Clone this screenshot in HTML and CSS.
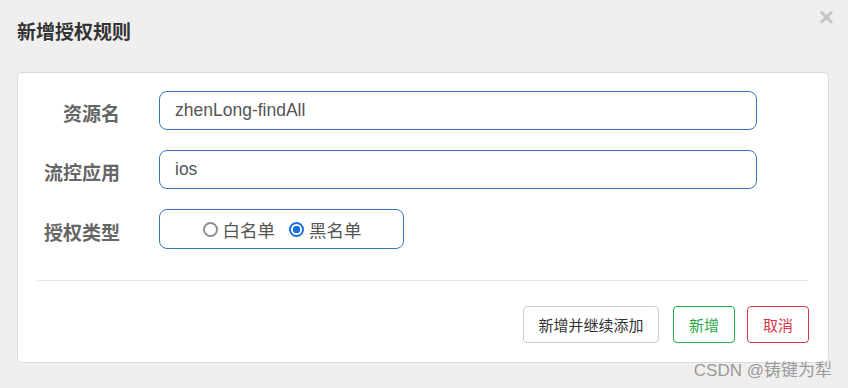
FILE: index.html
```html
<!DOCTYPE html>
<html lang="zh">
<head>
<meta charset="utf-8">
<title>新增授权规则</title>
<link rel="stylesheet" href="styles.css">
</head>
<body>
<div class="dialog">
  <div class="header">
    <h3 class="title">新增授权规则</h3>
    <span class="close">×</span>
  </div>
  <div class="card">
    <div class="form">
      <label class="label">资源名</label>
      <div class="input">zhenLong-findAll</div>
      <label class="label">流控应用</label>
      <div class="input">ios</div>
      <label class="label">授权类型</label>
      <div class="radio-group">
        <span class="radio"></span><span class="radio-text">白名单</span>
        <span class="radio checked"></span><span class="radio-text">黑名单</span>
      </div>
    </div>
    <div class="divider"></div>
    <div class="actions">
      <button class="btn btn-default">新增并继续添加</button>
      <button class="btn btn-success">新增</button>
      <button class="btn btn-danger">取消</button>
    </div>
  </div>
  <div class="watermark">CSDN @铸键为犁</div>
</div>
</body>
</html>
```

FILE: styles.css
```css
html, body {
  margin: 0;
  padding: 0;
  background: #efefef;
  font-family: "Liberation Sans", "Noto Sans CJK SC", sans-serif;
}
.dialog {
  position: relative;
  width: 848px;
  height: 388px;
}
.header {
  height: 72px;
  box-sizing: border-box;
  padding: 19px 0 0 17px;
}
.title {
  margin: 0;
  font-family: "Noto Sans CJK SC", sans-serif;
  font-size: 19px;
  line-height: 24px;
  font-weight: 700;
  color: #333;
}
.close {
  position: absolute;
  right: 14px;
  top: 3px;
  font-size: 26px;
  line-height: 28px;
  font-weight: 700;
  color: #c4c4c4;
  font-family: "Liberation Sans", sans-serif;
}
.card {
  margin: 0 19px 0 17px;
  height: 291px;
  box-sizing: border-box;
  background: #fff;
  border: 1px solid #dcdcdc;
  border-radius: 5px;
  padding-top: 18px;
}
.form {
  display: grid;
  grid-template-columns: 102px 598px;
  column-gap: 39px;
  row-gap: 20px;
  align-items: center;
}
.label {
  text-align: right;
  font-family: "Noto Sans CJK SC", sans-serif;
  font-weight: 700;
  font-size: 19px;
  line-height: 26px;
  color: #666;
  padding-top: 5px;
}
.input {
  height: 39px;
  box-sizing: border-box;
  border: 1px solid #3479b7;
  border-radius: 8px;
  padding: 0 15px;
  display: flex;
  align-items: center;
  font-size: 17.5px;
  color: #555;
}
.radio-group {
  width: 245px;
  height: 40px;
  box-sizing: border-box;
  border: 1px solid #3479b7;
  border-radius: 8px;
  display: flex;
  align-items: center;
  justify-content: center;
  padding-left: 1px;
}
.radio {
  width: 15px;
  height: 15px;
  box-sizing: border-box;
  border: 2px solid #8e8c99;
  border-radius: 50%;
  margin-right: 5px;
}
.radio.checked {
  border: 2px solid #1a6fe0;
  background: radial-gradient(circle, #1a6fe0 0 3.5px, #fff 4px);
}
.radio-text {
  font-family: "Noto Sans CJK SC", sans-serif;
  font-size: 17.5px;
  color: #555;
  margin-right: 14px;
}
.radio-text:last-child {
  margin-right: 0;
}
.divider {
  height: 1px;
  background: #e5e5e5;
  margin: 31px 20px 0 19px;
}
.actions {
  display: flex;
  justify-content: flex-end;
  padding-right: 19px;
  margin-top: 25px;
}
.btn {
  height: 37px;
  box-sizing: border-box;
  background: #fff;
  border-radius: 4px;
  font-family: "Noto Sans CJK SC", sans-serif;
  font-size: 15px;
  padding: 0;
  cursor: pointer;
}
.btn-default {
  width: 136px;
  border: 1px solid #cccccc;
  color: #333;
  margin-right: 14px;
}
.btn-success {
  width: 62px;
  border: 1px solid #28a745;
  color: #28a745;
  margin-right: 12px;
}
.btn-danger {
  width: 62px;
  border: 1px solid #dc3545;
  color: #dc3545;
}
.watermark {
  position: absolute;
  right: 16px;
  bottom: 6px;
  font-family: "Liberation Sans", "Noto Sans CJK SC", sans-serif;
  font-size: 17px;
  color: #9a9a9a;
  line-height: 22px;
}
```
